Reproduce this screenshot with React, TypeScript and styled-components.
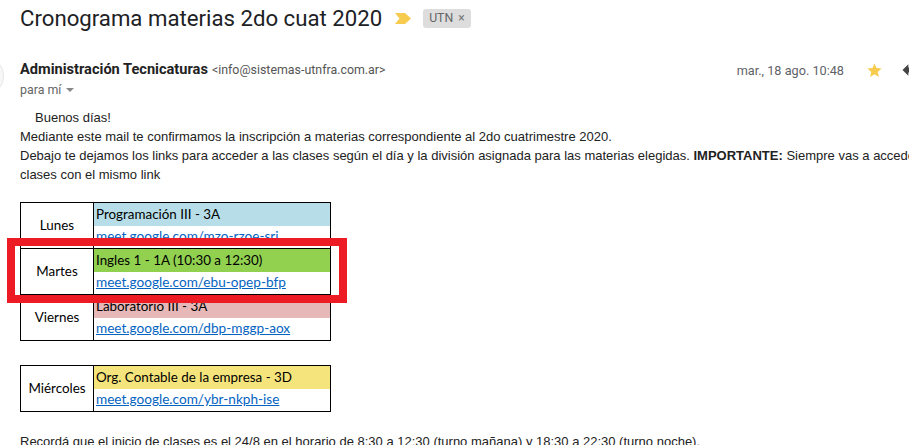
import React from "react";
import styled, { createGlobalStyle } from "styled-components";

const GlobalStyle = createGlobalStyle`
  html, body { margin: 0; padding: 0; background: #fff; overflow: hidden; }
  * { box-sizing: border-box; }
`;

const Page = styled.div`
  position: relative;
  width: 909px;
  height: 445px;
  overflow: hidden;
  background: #fff;
  font-family: Roboto, Arial, sans-serif;
`;

const SubjectLine = styled.div`
  display: flex;
  align-items: center;
  height: 35px;
  padding-left: 20px;
  padding-top: 1px;
`;

const Title = styled.h1`
  margin: 0;
  font-family: Roboto, "Open Sans", sans-serif;
  font-weight: 400;
  font-size: 22.2px;
  color: #202124;
  white-space: nowrap;
`;

const ImportantMarker = styled.svg`
  margin-left: 13px;
  flex: none;
`;

const Chip = styled.span`
  margin-left: 12px;
  display: inline-flex;
  align-items: center;
  gap: 5px;
  height: 19px;
  padding: 0 6px 0 6px;
  background: #dddddd;
  border-radius: 3px;
  color: #666;
  font-family: Roboto, Arial, sans-serif;
  font-size: 12.3px;
`;

const ChipClose = styled.span`
  font-size: 12px;
  color: #777;
`;

const HeaderRow = styled.div`
  display: flex;
  align-items: flex-start;
  margin-top: 25px;
  height: 48px;
`;

const Avatar = styled.div`
  flex: none;
  width: 40px;
  height: 40px;
  margin-left: -36px;
  margin-top: -4px;
  margin-right: 16px;
  border-radius: 50%;
  border: 1px solid #e8e8e8;
  background: #f7f7f7;
`;

const SenderBlock = styled.div`
  display: flex;
  flex-direction: column;
  flex: 1;
`;

const SenderLine = styled.div`
  display: flex;
  align-items: baseline;
  gap: 4px;
  height: 20px;
  white-space: nowrap;
`;

const SenderName = styled.span`
  font-family: Roboto, Arial, sans-serif;
  font-weight: 700;
  font-size: 14.6px;
  color: #222;
`;

const SenderEmail = styled.span`
  font-family: Roboto, Arial, sans-serif;
  font-size: 12.4px;
  color: #555;
`;

const ToLine = styled.div`
  display: flex;
  align-items: center;
  gap: 5px;
  font-size: 12.4px;
  color: #666;
  height: 18px;
`;

const Caret = styled.span`
  width: 0;
  height: 0;
  border-left: 4px solid transparent;
  border-right: 4px solid transparent;
  border-top: 4px solid #888;
  margin-top: 1px;
`;

const Meta = styled.div`
  display: flex;
  align-items: center;
  height: 20px;
  white-space: nowrap;
  margin-right: -11px;
`;

const DateText = styled.span`
  font-size: 12.7px;
  color: #5f6368;
  margin-right: 22px;
`;

const IconSlot = styled.svg<{ $ml?: number }>`
  flex: none;
  margin-left: ${(p) => p.$ml ?? 0}px;
`;

const Body = styled.div`
  padding-left: 20px;
  font-family: Arial, "Liberation Sans", sans-serif;
  font-size: 13px;
  color: #222;
  line-height: 19px;
  white-space: nowrap;
`;

const Greeting = styled.div`
  padding-left: 15px;
`;

const Para = styled.div``;

const Strong = styled.b`
  font-weight: 700;
`;

const Table = styled.table<{ $mt: number }>`
  border-collapse: collapse;
  margin-top: ${(p) => p.$mt}px;
  font-family: Lato, "Open Sans", sans-serif;
  font-size: 13.4px;
  color: #000;
  border: 1px solid #000;
  table-layout: fixed;
  width: 311px;
`;

const DayCell = styled.td`
  width: 73px;
  border: 1px solid #000;
  text-align: center;
  vertical-align: middle;
  padding: 0;
`;

const SubjectCell = styled.td<{ $bg: string }>`
  background: ${(p) => p.$bg};
  height: 23px;
  padding: 0 0 0 2px;
  border-right: 1px solid #000;
  white-space: nowrap;
  vertical-align: middle;
`;

const LinkCell = styled.td`
  height: 23px;
  padding: 0 0 0 2px;
  border-right: 1px solid #000;
  white-space: nowrap;
  vertical-align: middle;
  font-size: 13.6px;
`;

const GroupEnd = styled.tr`
  border-bottom: 1px solid #000;
`;

const MeetLink = styled.a`
  color: #0563c1;
  text-decoration: underline;
`;

const Reminder = styled.div`
  margin-top: 20px;
`;

const Highlight = styled.div`
  position: absolute;
  left: 7px;
  top: 238px;
  width: 340px;
  height: 65px;
  border: 8px solid #ed1c24;
`;

type Entry = { day: string; subject: string; color: string; link: string };

const group1: Entry[] = [
  { day: "Lunes", subject: "Programación III - 3A", color: "#b7dee8", link: "meet.google.com/mzo-rzoe-sri" },
  { day: "Martes", subject: "Ingles 1 - 1A (10:30 a 12:30)", color: "#92d050", link: "meet.google.com/ebu-opep-bfp" },
  { day: "Viernes", subject: "Laboratorio III - 3A", color: "#e6b8b7", link: "meet.google.com/dbp-mggp-aox" },
];

const group2: Entry[] = [
  { day: "Miércoles", subject: "Org. Contable de la empresa - 3D", color: "#f5e47c", link: "meet.google.com/ybr-nkph-ise" },
];

function Schedule({ entries, mt }: { entries: Entry[]; mt: number }) {
  return (
    <Table $mt={mt}>
      <tbody>
        {entries.map((e) => (
          <React.Fragment key={e.day}>
            <tr>
              <DayCell rowSpan={2}>{e.day}</DayCell>
              <SubjectCell $bg={e.color}>{e.subject}</SubjectCell>
            </tr>
            <GroupEnd>
              <LinkCell>
                <MeetLink href="#">{e.link}</MeetLink>
              </LinkCell>
            </GroupEnd>
          </React.Fragment>
        ))}
      </tbody>
    </Table>
  );
}

export default function App() {
  return (
    <Page>
      <GlobalStyle />
      <SubjectLine>
        <Title>Cronograma materias 2do cuat 2020</Title>
        <ImportantMarker width="16" height="11" viewBox="0 0 16 11">
          <path d="M0 0 H10 L16 5.5 L10 11 H0 L4.5 5.5 Z" fill="#f7cb4d" />
        </ImportantMarker>
        <Chip>
          UTN<ChipClose>×</ChipClose>
        </Chip>
      </SubjectLine>
      <HeaderRow>
        <Avatar />
        <SenderBlock>
          <SenderLine>
            <SenderName>Administración Tecnicaturas</SenderName>
            <SenderEmail>&lt;info@sistemas-utnfra.com.ar&gt;</SenderEmail>
          </SenderLine>
          <ToLine>
            para mí <Caret />
          </ToLine>
        </SenderBlock>
        <Meta>
          <DateText>mar., 18 ago. 10:48</DateText>
          <IconSlot width="17" height="17" viewBox="0 0 24 24">
            <path
              d="M12 17.27L18.18 21l-1.64-7.03L22 9.24l-7.19-.61L12 2 9.19 8.63 2 9.24l5.46 4.73L5.82 21z"
              fill="#f7cb4d"
            />
          </IconSlot>
          <IconSlot width="20" height="20" viewBox="0 0 24 24" $ml={17}>
            <path d="M10 9V5l-7 7 7 7v-4.1c5 0 8.5 1.6 11 5.1-1-5-4-10-11-11z" fill="#444" />
          </IconSlot>
        </Meta>
      </HeaderRow>
      <Body>
        <Greeting>Buenos días!</Greeting>
        <Para>Mediante este mail te confirmamos la inscripción a materias correspondiente al 2do cuatrimestre 2020.</Para>
        <Para>
          Debajo te dejamos los links para acceder a las clases según el día y la división asignada para las materias elegidas.{" "}
          <Strong>IMPORTANTE:</Strong> Siempre vas a acceder a las
        </Para>
        <Para>clases con el mismo link</Para>
        <Schedule entries={group1} mt={18} />
        <Schedule entries={group2} mt={24} />
        <Reminder>
          Recordá que el inicio de clases es el 24/8 en el horario de 8:30 a 12:30 (turno mañana) y 18:30 a 22:30 (turno noche).
        </Reminder>
      </Body>
      <Highlight />
    </Page>
  );
}
